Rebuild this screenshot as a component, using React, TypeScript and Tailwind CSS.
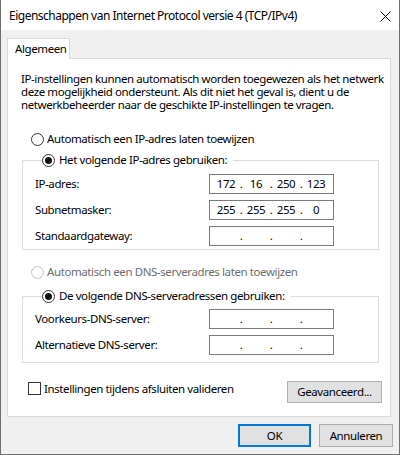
import React from "react";

const FONT = "font-['Segoe_UI','Noto_Sans',sans-serif] tracking-[-0.4px]";

function Radio({ checked, disabled }: { checked?: boolean; disabled?: boolean }) {
  return (
    <span
      className={
        "w-[13px] h-[13px] rounded-full border flex items-center justify-center shrink-0 bg-white " +
        (disabled ? "border-[#c4c4c4]" : "border-[#333333]")
      }
    >
      {checked ? <span className="w-[7px] h-[7px] rounded-full bg-[#111111]" /> : null}
    </span>
  );
}

function IpField({ parts }: { parts?: string[] }) {
  const p = parts ?? ["", "", "", ""];
  return (
    <div className="w-[125px] h-[20px] border border-[#7a7a7a] bg-white flex items-center pl-[3px] leading-[14px]">
      {p.map((v, i) => (
        <React.Fragment key={i}>
          <span className="w-[26px] text-center">{v}</span>
          {i < 3 ? <span className="w-[4px] text-center">.</span> : null}
        </React.Fragment>
      ))}
    </div>
  );
}

function Row({ label, parts }: { label: string; parts?: string[] }) {
  return (
    <div className="grid grid-cols-[174px_125px] items-center">
      <span className="leading-[14px]">{label}</span>
      <IpField parts={parts} />
    </div>
  );
}

export default function App() {
  return (
    <div
      className={
        "w-[400px] h-[455px] bg-[#f0f0f0] border-x border-b border-[#6e6e6e] flex flex-col text-[11.5px] text-black " +
        FONT
      }
    >
      <div className="h-[30px] bg-white flex items-center justify-between pl-[8px] pr-[8px] pt-[2px] shrink-0">
        <span className="text-[12px] leading-[16px] tracking-[-0.5px]">
          Eigenschappen van Internet Protocol versie 4 (TCP/IPv4)
        </span>
        <svg width="11" height="11" viewBox="0 0 11 11">
          <path d="M0.5 0.5 L10.5 10.5 M10.5 0.5 L0.5 10.5" stroke="#000" strokeWidth="1" />
        </svg>
      </div>

      <div className="flex-1 px-[6px] pt-[8px] flex flex-col">
        <div className="w-[63px] h-[21px] border border-b-0 border-[#d9d9d9] bg-white relative z-10 -mb-px flex items-center pl-[7px]">
          Algemeen
        </div>
        <div className="w-[384px] h-[359px] border border-[#d9d9d9] bg-white pl-[13px] pr-[8px] pt-[13px] flex flex-col">
          <div className="leading-[13px] whitespace-nowrap">
            <div>IP-instellingen kunnen automatisch worden toegewezen als het netwerk</div>
            <div>deze mogelijkheid ondersteunt. Als dit niet het geval is, dient u de</div>
            <div>netwerkbeheerder naar de geschikte IP-instellingen te vragen.</div>
          </div>

          <div className="mt-[20px] h-[16px] flex items-center pl-[10px] gap-[3px]">
            <Radio />
            <span>Automatisch een IP-adres laten toewijzen</span>
          </div>

          <fieldset className="mt-[5px] ml-[1px] w-[357px] border border-[#dcdcdc] pl-[12px] pt-[6px] pb-[3px] flex flex-col gap-[6px]">
            <legend className="ml-[7px] pr-[6px] h-[16px] flex items-center gap-[4px] bg-white">
              <Radio checked />
              <span>Het volgende IP-adres gebruiken:</span>
            </legend>
            <Row label="IP-adres:" parts={["172", "16", "250", "123"]} />
            <Row label="Subnetmasker:" parts={["255", "255", "255", "0"]} />
            <Row label="Standaardgateway:" />
          </fieldset>

          <div className="mt-[14px] h-[16px] flex items-center pl-[10px] gap-[3px] text-[#6d6d6d]">
            <Radio disabled />
            <span>Automatisch een DNS-serveradres laten toewijzen</span>
          </div>

          <fieldset className="mt-[8px] ml-[1px] w-[357px] border border-[#dcdcdc] pl-[12px] pt-[5px] pb-[7px] flex flex-col gap-[6px]">
            <legend className="ml-[7px] pr-[6px] h-[16px] flex items-center gap-[4px] bg-white">
              <Radio checked />
              <span>De volgende DNS-serveradressen gebruiken:</span>
            </legend>
            <Row label="Voorkeurs-DNS-server:" />
            <Row label="Alternatieve DNS-server:" />
          </fieldset>

          <div className="mt-[18px] flex items-start">
            <div className="mt-[1px] pl-[7px] flex items-center gap-[3px]">
              <span className="w-[13px] h-[13px] border border-[#333333] bg-white shrink-0" />
              <span className="leading-[13px]">Instellingen tijdens afsluiten valideren</span>
            </div>
            <button className="ml-auto w-[95px] h-[22px] border border-[#adadad] bg-[#e1e1e1] flex items-center justify-center">
              Geavanceerd...
            </button>
          </div>
        </div>

        <div className="mt-[7px] flex justify-end gap-[8px]">
          <button className="w-[73px] h-[23px] border-2 border-[#0078d7] bg-[#e1e1e1] flex items-center justify-center">
            OK
          </button>
          <button className="w-[74px] h-[23px] border border-[#adadad] bg-[#e1e1e1] flex items-center justify-center">
            Annuleren
          </button>
        </div>
      </div>
    </div>
  );
}
